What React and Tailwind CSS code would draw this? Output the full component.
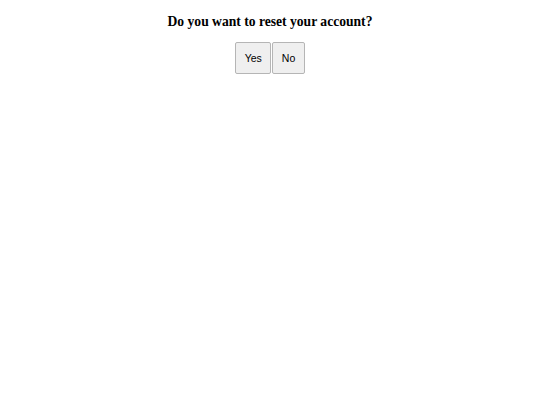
export default function App() {
  return (
    <div className="min-h-[405px] w-full bg-white flex flex-col items-center pt-[12px]">
      <h3 className="text-[13.6px] font-bold leading-normal text-black font-['Liberation_Serif',serif]">
        Do you want to reset your account?
      </h3>
      <div className="mt-[10px] flex gap-[1px]">
        <button className="h-8 px-[8.5px] rounded-[2px] border border-[#b5b5b5] bg-[#efefef] text-[10.5px] text-black font-['Liberation_Sans',sans-serif]">
          Yes
        </button>
        <button className="h-8 px-[8.5px] rounded-[2px] border border-[#b5b5b5] bg-[#efefef] text-[10.5px] text-black font-['Liberation_Sans',sans-serif]">
          No
        </button>
      </div>
    </div>
  );
}
